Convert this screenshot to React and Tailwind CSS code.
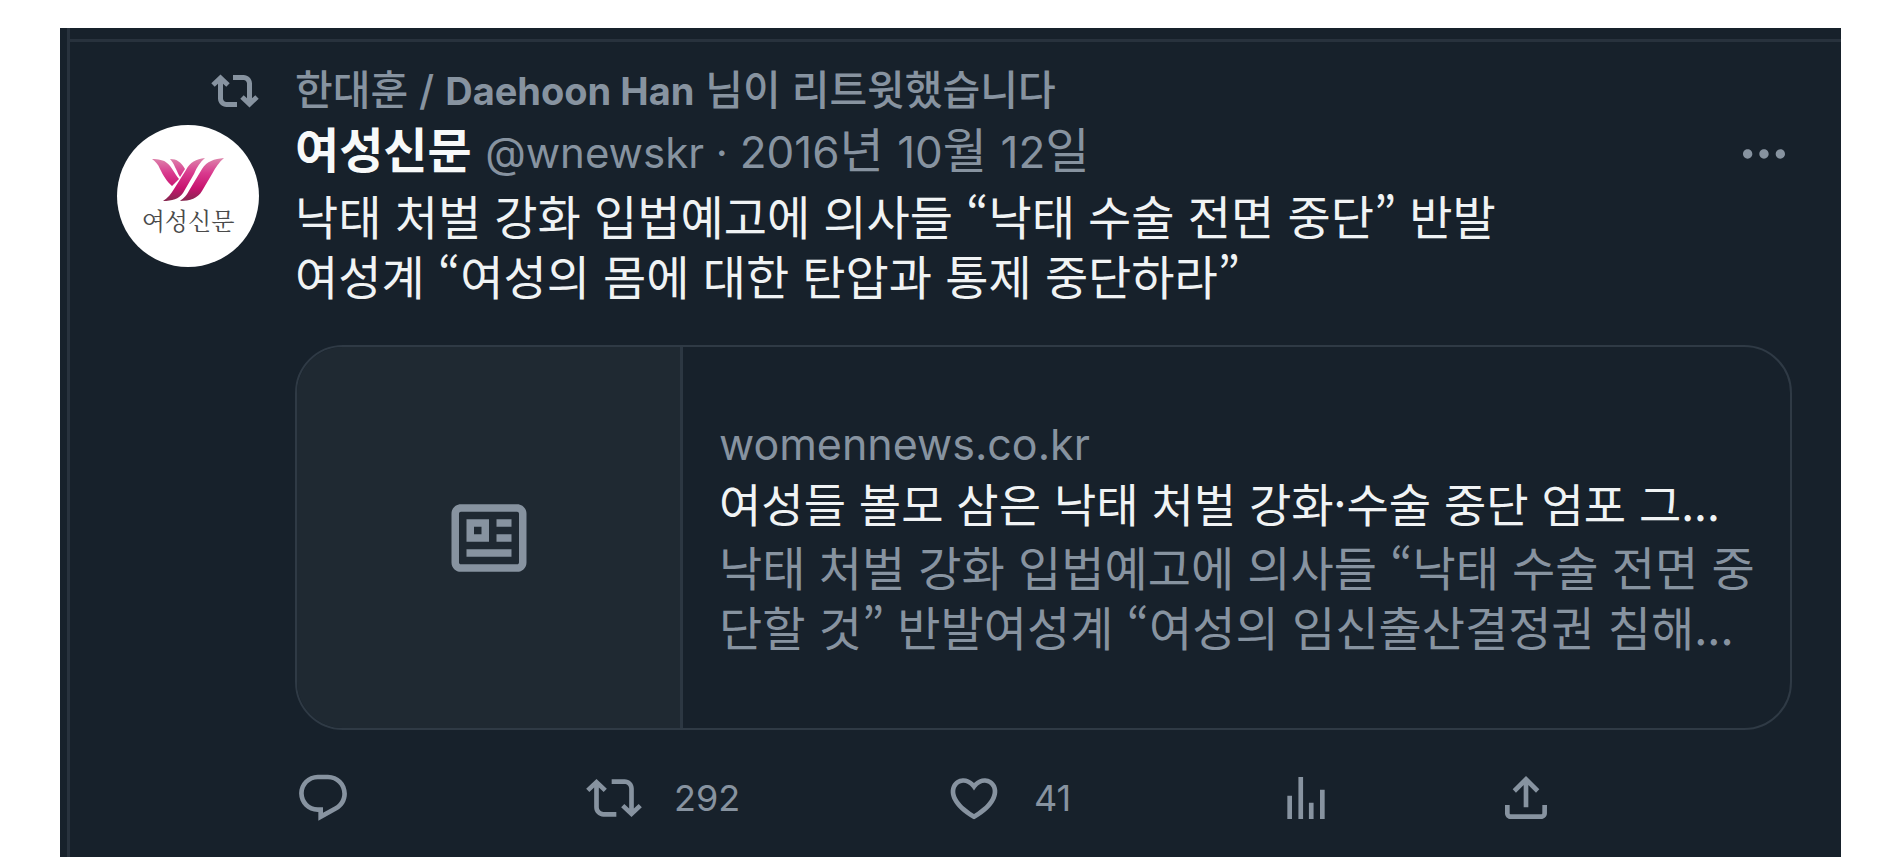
import React from "react";

const PATHS = {
  retweetBold:
    "M4.75 3.79l4.603 4.3-1.706 1.82L6 8.38v7.37c0 .97.784 1.75 1.75 1.75H13V20H7.75c-2.347 0-4.25-1.9-4.25-4.25V8.38L1.853 9.91.147 8.09l4.603-4.3zm11.5 2.71H11V4h5.25c2.347 0 4.25 1.9 4.25 4.25v7.37l1.647-1.53 1.706 1.82-4.603 4.3-4.603-4.3 1.706-1.82L18 15.62V8.25c0-.97-.784-1.75-1.75-1.75z",
  retweet:
    "M4.5 3.88l4.432 4.14-1.364 1.46L5.5 7.55V16c0 1.1.896 2 2 2H13v2H7.5c-2.209 0-4-1.79-4-4V7.55L1.432 9.48.068 8.02 4.5 3.88zM16.5 6H11V4h5.5c2.209 0 4 1.79 4 4v8.45l2.068-1.93 1.364 1.46-4.432 4.14-4.432-4.14 1.364-1.46 2.068 1.93V8c0-1.1-.896-2-2-2z",
  reply:
    "M1.751 10c0-4.42 3.584-8 8.005-8h4.366c4.49 0 8.129 3.64 8.129 8.13 0 2.96-1.607 5.68-4.196 7.11l-8.054 4.46v-3.69h-.067c-4.49.1-8.183-3.51-8.183-8.01zm8.005-6c-3.317 0-6.005 2.69-6.005 6 0 3.37 2.77 6.08 6.138 6.01l.351-.01h1.761v2.3l5.087-2.81c1.951-1.08 3.163-3.13 3.163-5.36 0-3.39-2.744-6.13-6.129-6.13H9.756z",
  like: "M16.697 5.5c-1.222-.06-2.679.51-3.89 2.16l-.805 1.09-.806-1.09C9.984 6.01 8.526 5.44 7.304 5.5c-1.243.07-2.349.78-2.91 1.91-.552 1.12-.633 2.78.479 4.82 1.074 1.97 3.257 4.27 7.129 6.61 3.87-2.34 6.052-4.64 7.126-6.61 1.111-2.04 1.03-3.7.477-4.82-.561-1.13-1.666-1.84-2.908-1.91zm4.187 7.69c-1.351 2.48-4.001 5.12-8.379 7.67l-.503.3-.504-.3c-4.379-2.55-7.029-5.19-8.382-7.67-1.36-2.5-1.41-4.86-.514-6.67.887-1.79 2.647-2.91 4.601-3.01 1.651-.09 3.368.56 4.798 2.01 1.429-1.45 3.146-2.1 4.796-2.01 1.954.1 3.714 1.22 4.601 3.01.896 1.81.846 4.17-.514 6.67z",
  views:
    "M8.75 21V3h2v18h-2zM18 21V8.5h2V21h-2zM4 21l.004-10h2L6 21H4zm9.248 0v-7h2v7h-2z",
  share:
    "M12 2.59l5.7 5.7-1.41 1.42L13 6.41V16h-2V6.41l-3.3 3.3-1.41-1.42L12 2.59zM21 15l-.02 3.51c0 1.38-1.12 2.49-2.5 2.49H5.5C4.11 21 3 19.88 3 18.5V15h2v3.5c0 .28.22.5.5.5h12.98c.28 0 .5-.22.5-.5L19 15h2z",
  more: "M3 12c0-1.1.9-2 2-2s2 .9 2 2-.9 2-2 2-2-.9-2-2zm9 2c1.1 0 2-.9 2-2s-.9-2-2-2-2 .9-2 2 .9 2 2 2zm7 0c1.1 0 2-.9 2-2s-.9-2-2-2-2 .9-2 2 .9 2 2 2z",
  article:
    "M1.998 5.5c0-1.38 1.119-2.5 2.5-2.5h15c1.381 0 2.5 1.12 2.5 2.5v13c0 1.38-1.119 2.5-2.5 2.5h-15c-1.381 0-2.5-1.12-2.5-2.5v-13zm2.5-.5c-.276 0-.5.22-.5.5v13c0 .28.224.5.5.5h15c.276 0 .5-.22.5-.5v-13c0-.28-.224-.5-.5-.5h-15zM6 7h6v6H6V7zm2 2v2h2V9H8zm10 0h-4V7h4v2zm0 4h-4v-2h4v2zm-.002 4h-12v-2h12v2z",
};

function Icon({ name, className }) {
  return (
    <svg viewBox="0 0 24 24" fill="currentColor" aria-hidden="true" className={className}>
      <path d={PATHS[name]} />
    </svg>
  );
}

function Action({ name, label, count }) {
  return (
    <button type="button" aria-label={label} className="flex items-center gap-8 justify-self-start">
      <Icon name={name} className="size-14 shrink-0" />
      {count && <span className="text-[36px] leading-[56px]">{count}</span>}
    </button>
  );
}

function Avatar() {
  return (
    <a
      href="#profile"
      className="flex size-[142px] flex-col items-center rounded-full bg-white pt-[33px]"
    >
      <svg viewBox="0 0 72 44" aria-hidden="true" className="h-11 w-[72px]">
        <defs>
          <linearGradient id="wing" gradientUnits="userSpaceOnUse" x1="0" y1="0" x2="0" y2="43">
            <stop offset="0" stopColor="#dd86ac" />
            <stop offset="0.35" stopColor="#d93a8e" />
            <stop offset="0.7" stopColor="#c8146f" />
            <stop offset="1" stopColor="#84284f" />
          </linearGradient>
        </defs>
        <g fill="url(#wing)">
          <path d="M0 1C6 1 12 2 15 5C20 9 22 15 27 21L20 28C15 24 11 17 8 11C6 6 3 3 0 1Z" />
          <path d="M18 1C25 1 29 4 33 11L28 19C24 12 22 5 18 1Z" />
          <path d="M53 0C44 1 38 4 34 12L22 31C19 36 16 40 11 43C20 43 27 41 31 35L42 16C45 9 48 4 53 0Z" />
          <path d="M72 0C62 1 55 3 50 11L38 31C35 37 32 40 28 43C38 43 46 40 50 33L60 16C64 9 67 4 72 0Z" />
        </g>
      </svg>
      <span className="font-['Noto_Serif_CJK_KR','Noto_Sans_CJK_KR',serif] text-[24px] leading-[36px] text-[#4a4a4a]">
        여성신문
      </span>
    </a>
  );
}

export default function App() {
  return (
    <main
      lang="ko"
      className="bg-white pt-7 pr-[59px] pb-2.5 pl-[60px] font-['Noto_Sans_CJK_KR',sans-serif] text-[#8793a0]"
    >
      <div className="bg-[#17212b] pl-[7px]">
        <div className="border-l-[3px] border-[#28323d] pt-[11px]">
          <article className="border-t-[3px] border-[#28323d] pt-[18px] pr-[49px] pb-[31px] pl-[47px]">
            <div className="flex items-center gap-9">
              <div className="flex w-[142px] shrink-0 justify-end">
                <Icon name="retweetBold" className="size-12" />
              </div>
              <a
                href="#retweeter"
                className="font-['Inter','Noto_Sans_CJK_KR',sans-serif] text-[41px] leading-[60px] font-medium"
              >
                한대훈 / <span className="text-[38px] font-bold">Daehoon Han</span> 님이 리트윗했습니다
              </a>
            </div>

            <div className="flex gap-9">
              <div className="shrink-0 pt-1">
                <Avatar />
              </div>
              <div className="min-w-0 flex-1">
                <header className="flex items-center justify-between font-['Inter','Noto_Sans_CJK_KR',sans-serif]">
                  <div className="text-[48px] leading-[60px]">
                    <a href="#author" className="font-bold text-[#f7f9f9]">
                      여성신문
                    </a>{" "}
                    <span className="text-[42px]">@wnewskr · </span>
                    <span className="text-[44px]">2016</span>년{" "}
                    <span className="text-[44px]">10</span>월{" "}
                    <span className="text-[44px]">12</span>일
                  </div>
                  <button type="button" aria-label="더 보기" className="pt-1">
                    <Icon name="more" className="size-14" />
                  </button>
                </header>

                <p className="mt-0.5 text-[47px] leading-[60px] text-[#f0f3f4]">
                  낙태 처벌 강화 입법예고에 의사들 “낙태 수술 전면 중단” 반발
                  <br />
                  여성계 “여성의 몸에 대한 탄압과 통제 중단하라”
                </p>

                <a
                  href="#article"
                  className="mt-10 flex h-[385px] overflow-hidden rounded-[48px] border-2 border-[#2f3a45]"
                >
                  <div className="flex w-[386px] shrink-0 items-center justify-center border-r-[3px] border-[#2c3742] bg-[#1f2932]">
                    <Icon name="article" className="size-[90px]" />
                  </div>
                  <div className="flex min-w-0 flex-1 flex-col justify-center pr-6 pb-1 pl-9">
                    <div className="font-['Inter',sans-serif] text-[43px] leading-[56px]">
                      womennews.co.kr
                    </div>
                    <div className="text-[46px] leading-[60px] text-[#f0f3f4]">
                      여성들 볼모 삼은 낙태 처벌 강화·수술 중단 엄포 그...
                    </div>
                    <div className="mt-1 text-[47px] leading-[60px] break-all">
                      낙태 처벌 강화 입법예고에 의사들 “낙태 수술 전면 중단할 것” 반발여성계
                      “여성의 임신출산결정권 침해...
                    </div>
                  </div>
                </a>

                <div className="mt-10 grid grid-cols-[291fr_360fr_332fr_220fr_294fr] font-['Inter',sans-serif]">
                  <Action name="reply" label="답글" />
                  <Action name="retweet" label="리트윗" count="292" />
                  <Action name="like" label="마음에 들어요" count="41" />
                  <Action name="views" label="조회수" />
                  <Action name="share" label="공유" />
                </div>
              </div>
            </div>
          </article>
        </div>
      </div>
    </main>
  );
}
